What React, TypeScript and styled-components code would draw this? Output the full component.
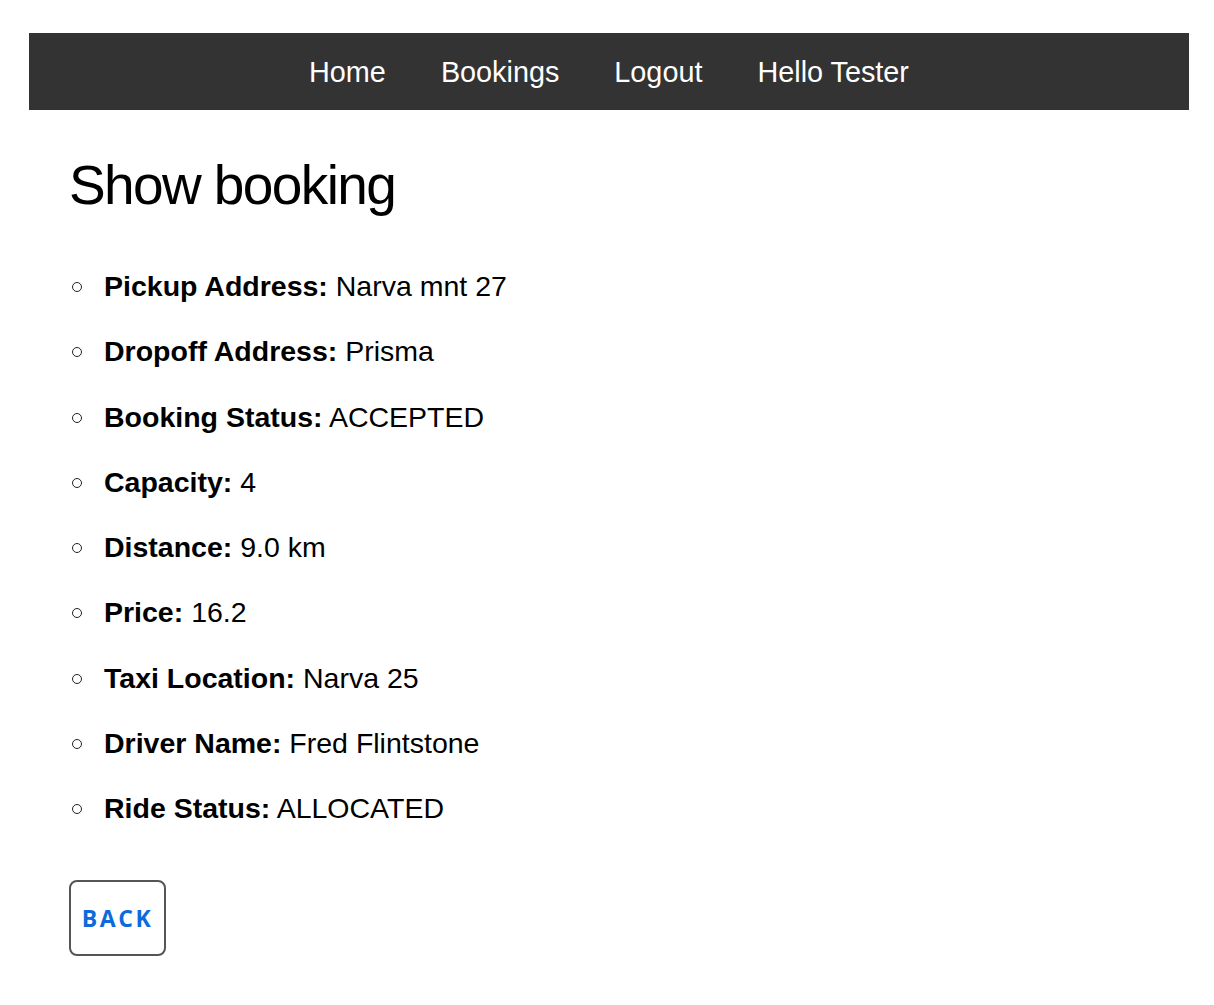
import React from "react";
import styled, { createGlobalStyle } from "styled-components";

const GlobalStyle = createGlobalStyle`
  html, body {
    margin: 0;
    padding: 0;
    background: #ffffff;
  }
  body {
    font-family: "Liberation Sans", Arial, sans-serif;
    color: #000000;
  }
`;

const Page = styled.div`
  padding: 33px 25px 40px 29px;
`;

const NavBar = styled.nav`
  background: #333333;
  display: flex;
  justify-content: center;
  align-items: center;
  gap: 55px;
  padding: 23px 0 21px 0;
`;

const NavLink = styled.a`
  color: #ffffff;
  font-size: 28.8px;
  line-height: 33px;
  text-decoration: none;
  cursor: pointer;
`;

const Content = styled.main`
  padding: 0 0 0 40px;
`;

const Title = styled.h1`
  margin: 44px 0 0 0;
  font-size: 55px;
  font-weight: 400;
  letter-spacing: -1.6px;
  line-height: 63px;
`;

const DetailList = styled.ul`
  list-style: none;
  margin: 53px 0 0 0;
  padding-left: 2.5px;
`;

const DetailItem = styled.li`
  display: flex;
  align-items: center;
  font-size: 28.5px;
  line-height: 32px;
  margin-bottom: 33.25px;
  &::before {
    content: "";
    flex: none;
    box-sizing: border-box;
    width: 10px;
    height: 10px;
    margin-top: 2px;
    border: 1.3px solid #222222;
    border-radius: 50%;
    margin-right: 22.5px;
  }
  &:last-child {
    margin-bottom: 0;
  }
`;

const ItemText = styled.span`
  white-space: pre;
`;

const Label = styled.strong`
  font-weight: 700;
`;

const BackButton = styled.button`
  margin-top: 56px;
  box-sizing: border-box;
  width: 97px;
  height: 76px;
  display: flex;
  align-items: center;
  justify-content: center;
  padding: 0;
  background: #ffffff;
  border: 2px solid #555555;
  border-radius: 8px;
  color: #0b6bde;
  font-family: "Open Sans", "Noto Sans", sans-serif;
  font-weight: 700;
  font-size: 23px;
  letter-spacing: 2.6px;
  cursor: pointer;
`;

const details: [string, string][] = [
  ["Pickup Address", "Narva mnt 27"],
  ["Dropoff Address", "Prisma"],
  ["Booking Status", "ACCEPTED"],
  ["Capacity", "4"],
  ["Distance", "9.0 km"],
  ["Price", "16.2"],
  ["Taxi Location", "Narva 25"],
  ["Driver Name", "Fred Flintstone"],
  ["Ride Status", "ALLOCATED"],
];

export default function App() {
  return (
    <>
      <GlobalStyle />
      <Page>
        <NavBar>
          <NavLink>Home</NavLink>
          <NavLink>Bookings</NavLink>
          <NavLink>Logout</NavLink>
          <NavLink>Hello Tester</NavLink>
        </NavBar>
        <Content>
          <Title>Show booking</Title>
          <DetailList>
            {details.map(([label, value]) => (
              <DetailItem key={label}>
                <ItemText>
                  <Label>{label}:</Label> {value}
                </ItemText>
              </DetailItem>
            ))}
          </DetailList>
          <BackButton>BACK</BackButton>
        </Content>
      </Page>
    </>
  );
}
